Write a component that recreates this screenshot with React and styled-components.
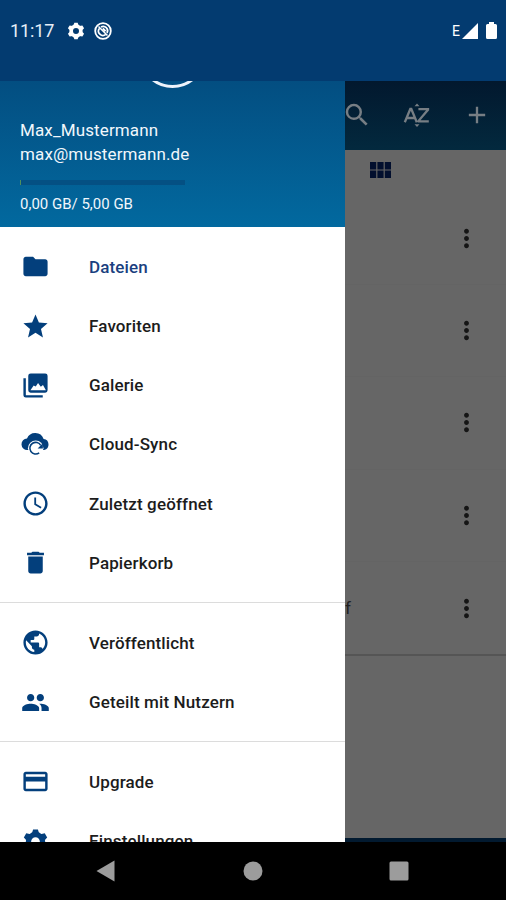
import React from "react";
import styled, { createGlobalStyle } from "styled-components";
import {
  MdFolder,
  MdStar,
  MdAccessTime,
  MdDelete,
  MdPublic,
  MdPeople,
  MdPayment,
  MdSearch,
  MdAdd,
  MdMoreVert,
} from "react-icons/md";

const files = ["", "", "", "", "f"];

const GalleryIcon = () => (
  <svg viewBox="0 0 24 24" fill="currentColor">
    <path d="M2 6v14a2 2 0 0 0 2 2h14v-2H4V6z" />
    <path
      fillRule="evenodd"
      d="M8 2h12a2 2 0 0 1 2 2v12a2 2 0 0 1-2 2H8a2 2 0 0 1-2-2V4a2 2 0 0 1 2-2zM7.800 16h12.800l-2.400-4.500-1.800 1.600-2.300-3.100-1.900 2.800-1.700-.9z"
    />
  </svg>
);

const CloudSyncIcon = () => (
  <svg viewBox="0 0 30 30">
    <path
      fill="currentColor"
      d="M6.6 20.600A5.900 5.900 0 0 1 6.2 8.800 A9.200 9.200 0 0 1 23.400 9.200 A5.800 5.800 0 0 1 24 20.600 Z"
    />
    <circle cx="15.2" cy="18.800" r="8" fill="#fff" />
    <path
      fill="none"
      stroke="currentColor"
      strokeWidth="1.6"
      d="M18.800 23.600A6 6 0 1 1 20.400 15.900"
    />
    <path fill="currentColor" d="M22.600 13.800v5.400h-5.400z" />
  </svg>
);

const Gear = ({ className }) => (
  <svg className={className} viewBox="0 0 24 24" fill="currentColor">
    <circle cx="12" cy="12" r="5.800" fill="none" stroke="currentColor" strokeWidth="4.400" />
    {[0, 60, 120, 180, 240, 300].map((angle) => (
      <path key={angle} d="M8.900 5.500L10 2h4l1.100 3.500z" transform={`rotate(${angle} 12 12)`} />
    ))}
  </svg>
);

const SortIcon = () => (
  <svg viewBox="0 0 28 28" fill="currentColor">
    <path d="M11.5 5.200L14 2.500l2.5 2.700zM11.5 23.200l2.5 2.800 2.5-2.800z" />
    <path
      fill="none"
      stroke="currentColor"
      strokeWidth="2.3"
      d="M1.800 21.300L7.300 8h1L13.800 21.300M4 17h7.500M15.400 8.200h9.600v.6L15.800 19.600v.7h10"
    />
  </svg>
);

const GridIcon = () => (
  <svg width="21" height="16" viewBox="0 0 21 16" fill="currentColor">
    <path d="M0 0h6.200v7.400H0zM7.400 0h6.200v7.400H7.400zM14.800 0H21v7.400h-6.200zM0 8.600h6.200V16H0zM7.400 8.600h6.200V16H7.400zM14.800 8.600H21V16h-6.200z" />
  </svg>
);

const NoSyncIcon = () => (
  <svg width="18" height="18" viewBox="0 0 18 18" fill="none" stroke="#fff">
    <circle cx="9" cy="9" r="7.8" strokeWidth="1.8" />
    <path d="M5.600 6.200A4.400 4.400 0 0 0 11.800 12.400" strokeWidth="1.7" />
    <path d="M7 5A4.400 4.400 0 0 1 13 11" strokeWidth="1.7" />
    <path d="M4.500 4.500l9 9" strokeWidth="1.5" />
    <path d="M8.800 6.500l2.700 2.700" strokeWidth="2" />
  </svg>
);

const App = () => {
  return (
    <Screen>
      <GlobalStyle />
      <StatusBar>
        <Clock>11:17</Clock>
        <StatusGear />
        <NoSyncIcon />
        <Signal>
          <span>E</span>
          <svg width="16" height="16" viewBox="0 0 16 16">
            <path d="M16 0v16H0z" fill="#fff" />
          </svg>
          <svg width="11" height="17" viewBox="0 0 11 17">
            <path d="M3 0h5v2h1.5Q11 2 11 3.5v12Q11 17 9.5 17h-8Q0 17 0 15.500v-12Q0 2 1.500 2H3z" fill="#fff" />
          </svg>
        </Signal>
      </StatusBar>

      <Body>
        <Drawer>
          <Account>
            <Avatar />
            <Name>Max_Mustermann</Name>
            <Name>max@mustermann.de</Name>
            <Quota />
            <Usage>0,00 GB/ 5,00 GB</Usage>
          </Account>
          <Section>
            <Item active><MdFolder />Dateien</Item>
            <Item><MdStar />Favoriten</Item>
            <Item><GalleryIcon />Galerie</Item>
            <Item><CloudSyncIcon />Cloud-Sync</Item>
            <Item><MdAccessTime />Zuletzt geöffnet</Item>
            <Item><MdDelete />Papierkorb</Item>
          </Section>
          <Section>
            <Item><MdPublic />Veröffentlicht</Item>
            <Item><MdPeople />Geteilt mit Nutzern</Item>
          </Section>
          <Section>
            <Item><MdPayment />Upgrade</Item>
            <Item><Gear />Einstellungen</Item>
          </Section>
        </Drawer>

        <Main>
          <Toolbar>
            <MdSearch />
            <SortIcon />
            <MdAdd />
          </Toolbar>
          <ViewBar>
            <GridIcon />
          </ViewBar>
          <FileList>
            {files.map((name, i) => (
              <FileRow key={i}>
                <span>{name}</span>
                <MdMoreVert />
              </FileRow>
            ))}
          </FileList>
          <BottomEdge />
        </Main>
      </Body>

      <NavBar>
        <svg width="20" height="22" viewBox="0 0 20 22">
          <path d="M18.500 0.500v21L0.500 11z" />
        </svg>
        <svg width="20" height="20" viewBox="0 0 20 20">
          <circle cx="10" cy="10" r="9.500" />
        </svg>
        <svg width="20" height="20" viewBox="0 0 20 20">
          <rect x="0.500" y="0.500" width="19" height="19" rx="1.500" />
        </svg>
      </NavBar>
    </Screen>
  );
};

const StatusGear = styled(Gear)`
  width: 20px;
  height: 20px;
  margin: 0 8px 0 12px;
`;

const GlobalStyle = createGlobalStyle`
  * {
    box-sizing: border-box;
  }

  body {
    margin: 0;
    font-family: Roboto, "Liberation Sans", sans-serif;
  }

  svg {
    display: block;
    flex-shrink: 0;
  }
`;

const Screen = styled.div`
  width: 506px;
  height: 900px;
  display: flex;
  flex-direction: column;
  overflow: hidden;
  background: #000;
`;

const StatusBar = styled.header`
  height: 80.500px;
  flex-shrink: 0;
  display: flex;
  align-items: center;
  padding: 0 9px 19px 10px;
  background: #033b70;
  color: #fff;
`;

const Clock = styled.span`
  width: 44px;
  font-size: 18px;
  letter-spacing: -0.1px;
  color: #e6eef8;
`;

const Signal = styled.div`
  margin-left: auto;
  display: flex;
  align-items: center;
  font-size: 14px;

  span {
    margin-right: 2px;
  }

  svg + svg {
    margin-left: 8px;
  }
`;

const Body = styled.div`
  height: 761px;
  flex-shrink: 0;
  display: grid;
  grid-template-columns: 345px 161px;
`;

const Drawer = styled.nav`
  height: 761px;
  overflow: hidden;
  background: #fff;
`;

const Account = styled.div`
  position: relative;
  height: 146.500px;
  overflow: hidden;
  padding: 37.500px 20px 0;
  background: linear-gradient(#034e81, #02699f);
  color: #f1f7fc;
`;

const Avatar = styled.div`
  position: absolute;
  top: -59.500px;
  left: 139px;
  width: 67px;
  height: 67px;
  border: 3px solid #eef3fb;
  border-radius: 50%;
`;

const Name = styled.div`
  font-size: 17px;
  line-height: 24px;
  letter-spacing: 0.13px;
`;

const Quota = styled.div`
  width: 165px;
  height: 5px;
  margin-top: 14px;
  border-left: 1px solid #4f8f5c;
  background: #045083;
`;

const Usage = styled.div`
  margin-top: 9px;
  font-size: 15px;
  line-height: 20px;
`;

const Section = styled.div`
  padding: 10.300px 0 9.500px;

  & + & {
    border-top: 1px solid #dcdcdc;
  }
`;

const Item = styled.div.withConfig({
  shouldForwardProp: (prop) => prop !== "active",
})`
  height: 59.200px;
  display: flex;
  align-items: center;
  gap: 39.500px;
  padding-left: 20.500px;
  font-size: 17px;
  font-weight: 500;
  letter-spacing: 0.13px;
  color: ${(props) => (props.active ? "#1a3f80" : "#1c1c1c")};

  svg {
    width: 29px;
    height: 29px;
    color: #033f7c;
  }
`;

const Main = styled.main`
  display: flex;
  flex-direction: column;
  overflow: hidden;
  background: #666;
`;

const Toolbar = styled.div`
  height: 69px;
  flex-shrink: 0;
  display: flex;
  align-items: center;
  gap: 32px;
  background: linear-gradient(#02182e, #03293e);
  color: #777e84;

  svg {
    width: 28px;
    height: 28px;
  }

  svg:first-child {
    width: 30px;
    height: 30px;
    margin: 0 -1px 0 -3px;
  }
`;

const ViewBar = styled.div`
  height: 43px;
  flex-shrink: 0;
  padding: 12.500px 0 0 25px;
  color: #020f2e;
`;

const FileList = styled.div`
  border-bottom: 2px solid #555;
`;

const FileRow = styled.div`
  height: 92.400px;
  display: flex;
  align-items: center;
  justify-content: space-between;
  padding-right: 25px;
  border-bottom: 1px solid #646464;
  font-size: 17px;
  color: #222;

  &:last-child {
    border-bottom: 0;
  }

  svg {
    width: 29px;
    height: 29px;
    color: #151515;
  }
`;

const BottomEdge = styled.div`
  height: 4px;
  margin-top: auto;
  background: #021a30;
`;

const NavBar = styled.footer`
  flex: 1;
  display: flex;
  justify-content: space-between;
  align-items: center;
  padding: 0 97px 0 96px;
  background: #000;
  fill: #9c9c9c;
`;

export default App;
